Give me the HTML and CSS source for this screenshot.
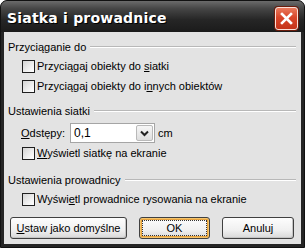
FILE: index.html
```html
<!DOCTYPE html>
<html lang="pl">

<head>
    <meta charset="UTF-8">
    <title>Siatka i prowadnice</title>
    <link rel="stylesheet" href="styles.css">
</head>

<body>
    <div class="window">
        <div class="titlebar">
            <span class="title">Siatka i prowadnice</span>
            <button class="close-btn">
                <svg width="13" height="13" viewBox="0 0 13 13">
                    <path d="M2 2 L11 11 M11 2 L2 11" stroke="#fff" stroke-width="2.6" stroke-linecap="square" />
                </svg>
            </button>
        </div>

        <div class="client">
            <div class="group-head group-first"><span>Przyciąganie do</span></div>
            <label class="check-row"><span class="box"></span><span>Przyciągaj obiekty do <u>s</u>iatki</span></label>
            <label class="check-row"><span class="box"></span><span>Przyciągaj obiekty do i<u>n</u>nych obiektów</span></label>

            <div class="group-head group-second"><span>Ustawienia siatki</span></div>
            <div class="spacing-row">
                <span class="spacing-label"><u>O</u>dstępy:</span>
                <div class="combo">
                    <span class="combo-value">0,1</span>
                    <span class="combo-btn">
                        <svg width="9" height="7" viewBox="0 0 9 7">
                            <path d="M1 1.5 L4.5 5 L8 1.5" fill="none" stroke="#222" stroke-width="2" />
                        </svg>
                    </span>
                </div>
                <span class="unit">cm</span>
            </div>
            <label class="check-row"><span class="box"></span><span><u>W</u>yświetl siatkę na ekranie</span></label>

            <div class="group-head group-third"><span>Ustawienia prowadnicy</span></div>
            <label class="check-row"><span class="box"></span><span>Wyświ<u>e</u>tl prowadnice rysowania na ekranie</span></label>

            <div class="buttons">
                <button class="btn btn-wide"><u>U</u>staw jako domyślne</button>
                <button class="btn btn-default"><span class="focus">OK</span></button>
                <button class="btn">Anuluj</button>
            </div>
        </div>
    </div>
</body>

</html>
```

FILE: styles.css
```css
body {
    margin: 0;
    padding: 0;
    background-color: #fff;
    font-family: "Liberation Sans", Arial, sans-serif;
    font-size: 11px;
    color: #000;
}

/* Ventana con marco oscuro */
.window {
    width: 305px;
    height: 248px;
    box-sizing: border-box;
    background-color: #252525;
    border: 1px solid #111;
    border-radius: 7px 7px 0 0;
    display: flex;
    flex-direction: column;
    overflow: hidden;
}

.titlebar {
    height: 31px;
    flex-shrink: 0;
    display: flex;
    align-items: center;
    justify-content: space-between;
    padding: 0 6px 0 6px;
    background: linear-gradient(#6b6b6b, #454545 25%, #262626 60%, #1b1b1b);
}

.title {
    color: #fff;
    font-family: "DejaVu Sans", sans-serif;
    font-weight: bold;
    font-size: 14px;
    letter-spacing: 0.2px;
    text-shadow: 1px 1px 0 #000;
    margin-top: 2px;
}

.close-btn {
    width: 23px;
    height: 23px;
    margin-top: 3px;
    padding: 0;
    border: 1px solid #fbe0d8;
    border-radius: 3px;
    background: linear-gradient(#ea7a5d, #d9462a 45%, #c5341a);
    box-shadow: 0 0 0 1px #6b1c0c;
    display: flex;
    align-items: center;
    justify-content: center;
}

/* Area de contenido */
.client {
    flex: 1;
    margin: 0 3px 3px 3px;
    background-color: #e3e3e3;
    padding: 8px 5px 0 4px;
    display: flex;
    flex-direction: column;
}

.group-head {
    display: flex;
    align-items: center;
    height: 14px;
}

.group-head span {
    margin-right: 4px;
    white-space: nowrap;
}

.group-head::after {
    content: "";
    flex: 1;
    height: 0;
    border-top: 1px solid #b8b8b8;
    border-bottom: 1px solid #fff;
}

.group-first {
    margin-bottom: 2px;
}

.group-second {
    margin-top: 8px;
    margin-bottom: 5px;
}

.group-third {
    margin-top: 10px;
    margin-bottom: 2px;
}

.check-row {
    display: flex;
    align-items: center;
    height: 20px;
    padding-left: 14px;
    white-space: nowrap;
}

.box {
    width: 11px;
    height: 11px;
    border: 1px solid #1f1f1f;
    background: linear-gradient(135deg, #d4d4d4, #f4f4f4 70%, #fff);
    margin-right: 2px;
    flex-shrink: 0;
}

u {
    text-decoration: underline;
    text-underline-offset: 1px;
}

.spacing-row {
    display: flex;
    align-items: center;
    height: 20px;
    padding-left: 13px;
}

.spacing-label {
    width: 49px;
}

.combo {
    width: 80px;
    height: 18px;
    border: 1px solid #a5a5a5;
    background-color: #fff;
    display: flex;
    align-items: center;
    justify-content: space-between;
    padding-left: 3px;
    box-sizing: content-box;
}

.combo-value {
    font-size: 12px;
}

.combo-btn {
    width: 17px;
    height: 16px;
    margin-right: 1px;
    border: 1px solid #b9b9b9;
    border-radius: 2px;
    background: linear-gradient(#f6f6f6, #dedede);
    box-sizing: border-box;
    display: flex;
    align-items: center;
    justify-content: center;
}

.unit {
    margin-left: 3px;
}

/* Botones */
.buttons {
    display: flex;
    gap: 12px;
    margin-top: 8px;
    padding-left: 2px;
}

.btn {
    height: 22px;
    width: 72px;
    padding: 0;
    font-family: "Liberation Sans", Arial, sans-serif;
    font-size: 11px;
    color: #000;
    border: 1px solid #404040;
    border-radius: 3px;
    background: linear-gradient(#fdfdfd, #f0f0f0 60%, #d8d8d8);
    box-shadow: inset -1px -1px 0 #c4c4c4;
}

.btn-wide {
    width: 117px;
}

.btn-default {
    width: 71px;
    box-shadow: inset 0 0 0 1px #f5c46a, inset 0 0 0 2px #e6a23e;
    display: flex;
    align-items: center;
    justify-content: center;
}

.btn-default .focus {
    display: block;
    width: 63px;
    height: 14px;
    line-height: 14px;
    border: 1px dotted #333;
}
```
